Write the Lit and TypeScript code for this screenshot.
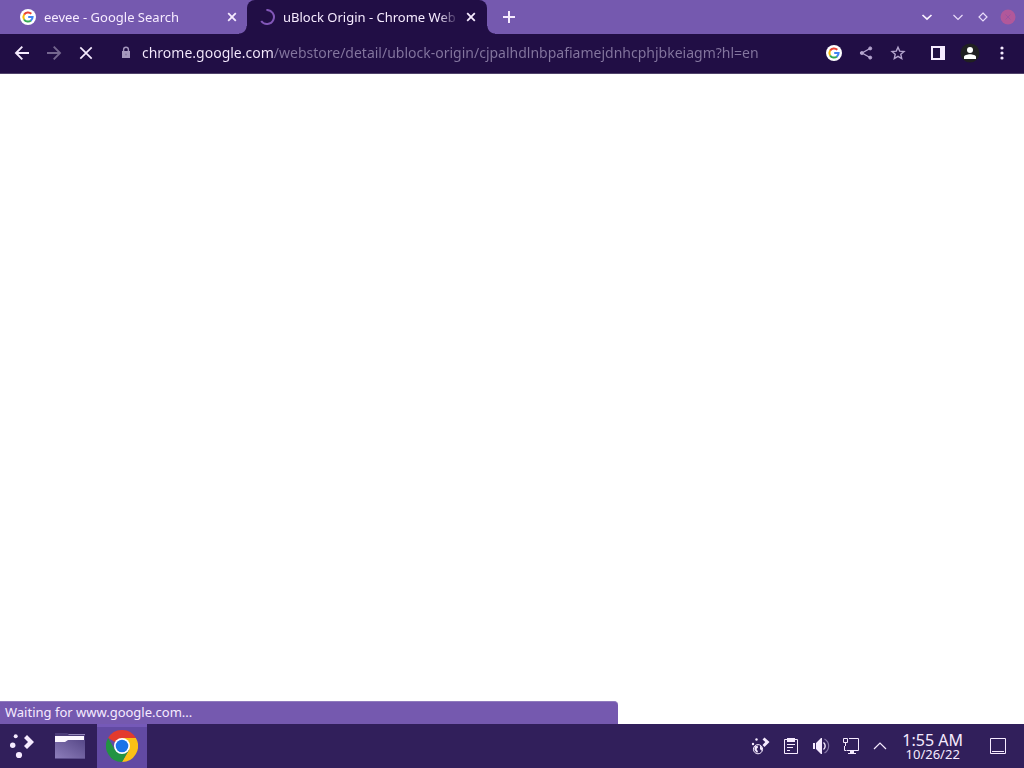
import { LitElement, html, css, svg } from "lit";
import { customElement } from "lit/decorators.js";

const googleG = html`<svg class="icon" width="16" height="16" viewBox="0 0 16 16" aria-hidden="true">
  <circle cx="8" cy="8" r="8" fill="#fff" />
  <g fill="none" stroke-width="2">
    <path d="M4.1 5.6A4.6 4.6 0 0 1 11.3 4.8" stroke="#ea4335" />
    <path d="M4.1 10.4A4.6 4.6 0 0 1 4.1 5.6" stroke="#fbbc05" />
    <path d="M11 11.5A4.6 4.6 0 0 1 4.1 10.4" stroke="#34a853" />
    <path d="M8.2 8H12.6A4.6 4.6 0 0 1 10.8 11.6" stroke="#4285f4" />
  </g>
</svg>`;

const line = (size: number, d: string, width = 2) => html`<svg class="icon" width=${size} height=${size}
  viewBox="0 0 ${size} ${size}" fill="none" stroke="currentColor" stroke-width=${width} aria-hidden="true">
  ${svg`<path d=${d} />`}
</svg>`;

const closeIcon = line(16, "M4.2 4.2L11.8 11.8M11.8 4.2L4.2 11.8", 1.8);

@customElement("browser-tabs")
export class BrowserTabs extends LitElement {
  static styles = css`
    :host {
      display: flex;
      height: 34px;
      background: #7559af;
      color: #f6ebff;
      font-size: 13px;
    }
    button {
      display: flex;
      align-items: center;
      justify-content: center;
      padding: 0;
      border: 0;
      background: none;
      color: inherit;
      font: inherit;
    }
    .icon { display: block; flex: none; }
    .tabs { display: flex; padding-left: 8px; min-width: 0; }
    .tab {
      position: relative;
      box-sizing: border-box;
      display: flex;
      align-items: center;
      gap: 4px;
      flex: 0 1 240px;
      width: 240px;
      min-width: 0;
      padding: 0 8px 0 12px;
    }
    .tab + .tab { margin-left: -1px; }
    .label {
      flex: 1;
      min-width: 0;
      justify-content: flex-start;
      gap: 8px;
      height: 34px;
    }
    .title {
      flex: 1;
      min-width: 0;
      overflow: hidden;
      white-space: nowrap;
      text-align: left;
      line-height: 20px;
      -webkit-mask-image: linear-gradient(to left, transparent, #000 20px);
      mask-image: linear-gradient(to left, transparent, #000 20px);
    }
    .active { background: #210e45; border-radius: 8px 8px 0 0; }
    .active::before,
    .active::after {
      content: "";
      position: absolute;
      bottom: 0;
      width: 8px;
      height: 8px;
    }
    .active::before { right: 100%; background: radial-gradient(circle at 0 0, transparent 7px, #210e45 8px); }
    .active::after { left: 100%; background: radial-gradient(circle at 100% 0, transparent 7px, #210e45 8px); }
    .new { width: 28px; margin-left: 8px; }
    .controls { display: flex; gap: 1px; margin-left: auto; padding-right: 4px; }
    .controls button { width: 24px; color: #e9dcfa; }
    .controls .search { margin-right: 6px; color: #fbf3ff; }
  `;

  render() {
    return html`
      <div class="tabs">
        <div class="tab">
          <button class="label">${googleG}<span class="title">eevee - Google Search</span></button>
          <button aria-label="Close eevee tab">${closeIcon}</button>
        </div>
        <div class="tab active">
          <button class="label" aria-current="page">
            <svg class="icon" width="16" height="16" viewBox="0 0 16 16" fill="none" stroke="#8257b8" stroke-width="2" aria-hidden="true">
              <path d="M7.4 1A7 7 0 1 1 2.2 12" />
            </svg>
            <span class="title">uBlock Origin - Chrome Web Store</span>
          </button>
          <button aria-label="Close uBlock tab">${closeIcon}</button>
        </div>
      </div>
      <button class="new" aria-label="New tab">${line(16, "M8 2V14M2 8H14")}</button>
      <div class="controls">
        <button class="search" aria-label="Search tabs">${line(16, "M3.5 6L8 10.2L12.5 6", 1.7)}</button>
        <button aria-label="Minimize">${line(16, "M3.5 6L8 10.5L12.5 6", 1.2)}</button>
        <button aria-label="Maximize">${line(16, "M8 4L12 8L8 12L4 8Z", 1.2)}</button>
        <button aria-label="Close window">
          <svg class="icon" width="16" height="16" viewBox="0 0 16 16" aria-hidden="true">
            <circle cx="8" cy="8" r="7.5" fill="#b1589a" />
            <path d="M5.5 5.5L10.5 10.5M10.5 5.5L5.5 10.5" stroke="#9c529f" />
          </svg>
        </button>
      </div>
    `;
  }
}

@customElement("browser-toolbar")
export class BrowserToolbar extends LitElement {
  static styles = css`
    :host {
      box-sizing: border-box;
      display: flex;
      align-items: center;
      gap: 4px;
      height: 40px;
      padding: 0 8px 1px;
      border-bottom: 1px solid #50436b;
      background: #210e45;
      color: #f6ebff;
    }
    button {
      display: flex;
      flex: none;
      align-items: center;
      justify-content: center;
      width: 28px;
      height: 28px;
      padding: 0;
      border: 0;
      background: none;
      color: inherit;
    }
    .icon { display: block; flex: none; }
    .dim { color: #75678f; }
    .soft { color: #b5a5cf; }
    .omnibox {
      display: flex;
      flex: 1;
      align-items: center;
      gap: 4px;
      min-width: 0;
      padding: 0 8px 0 14px;
    }
    .address {
      flex: 1;
      box-sizing: border-box;
      min-width: 0;
      height: 28px;
      margin-left: 4px;
      padding: 0 0 2px;
      border: 0;
      outline: 0;
      background: linear-gradient(to right, #f6ebff 132px, #84769f 132px);
      -webkit-background-clip: text;
      background-clip: text;
      color: transparent;
      font-family: inherit;
      font-size: 14px;
    }
  `;

  render() {
    return html`
      <button aria-label="Back">${line(16, "M15 8H2.5M8.3 1.7L2 8L8.3 14.3", 1.9)}</button>
      <button class="dim" aria-label="Forward" disabled>${line(16, "M1 8H13.5M7.7 1.7L14 8L7.7 14.3", 1.9)}</button>
      <button aria-label="Stop loading">${line(16, "M2.3 2.3L13.7 13.7M13.7 2.3L2.3 13.7", 1.7)}</button>
      <div class="omnibox">
        <svg class="icon" width="16" height="16" viewBox="0 0 16 16" fill="#a597bd" aria-hidden="true">
          <path d="M4 6H12V13H4Z" />
          <path d="M5.6 6V4.6A2.4 2.4 0 0 1 10.4 4.6V6" fill="none" stroke="#a597bd" stroke-width="1.4" />
          <circle cx="8" cy="9.5" r="1" fill="#8778a3" />
        </svg>
        <input class="address" type="text" aria-label="Address" spellcheck="false"
          value="chrome.google.com/webstore/detail/ublock-origin/cjpalhdlnbpafiamejdnhcphjbkeiagm?hl=en" />
        <button aria-label="Search with Google">${googleG}</button>
        <button class="soft" aria-label="Share">
          <svg class="icon" width="16" height="16" viewBox="0 0 16 16" fill="currentColor" stroke="currentColor" aria-hidden="true">
            <path d="M12 3.5L4 8L12 12.5" fill="none" stroke-width="1.4" />
            <circle cx="12.2" cy="3.4" r="1.5" /><circle cx="3.8" cy="8" r="1.5" /><circle cx="12.2" cy="12.6" r="1.5" />
          </svg>
        </button>
        <button class="soft" aria-label="Bookmark this page">
          ${line(16, "M8 2.2L9.7 6.1L14 6.5L10.8 9.3L11.7 13.5L8 11.3L4.3 13.5L5.2 9.3L2 6.5L6.3 6.1Z", 1.4)}
        </button>
      </div>
      <button aria-label="Side panel">
        <svg class="icon" width="16" height="16" viewBox="0 0 16 16" fill="currentColor" aria-hidden="true">
          <path fill-rule="evenodd" d="M1 1H15V15H1ZM3 3V13H10V3Z" />
        </svg>
      </button>
      <button aria-label="Profile">
        <svg class="icon" width="20" height="20" viewBox="0 0 20 20" aria-hidden="true">
          <circle cx="10" cy="10" r="9.5" fill="#202022" />
          <circle cx="10" cy="7" r="3" fill="#fff" />
          <path d="M4 16V14C4 12.2 7.5 11.3 10 11.3S16 12.2 16 14V16Z" fill="#fff" />
        </svg>
      </button>
      <button aria-label="Menu">
        <svg class="icon" width="16" height="16" viewBox="0 0 16 16" fill="currentColor" aria-hidden="true">
          <circle cx="8" cy="3" r="1.6" /><circle cx="8" cy="8" r="1.6" /><circle cx="8" cy="13" r="1.6" />
        </svg>
      </button>
    `;
  }
}

@customElement("desktop-panel")
export class DesktopPanel extends LitElement {
  static styles = css`
    :host {
      display: flex;
      height: 44px;
      background: #311f5b;
      color: #f6ebff;
    }
    button {
      display: flex;
      align-items: center;
      justify-content: center;
      padding: 0;
      border: 0;
      background: none;
      color: inherit;
      font: inherit;
    }
    .icon { display: block; flex: none; }
    .launchers { display: flex; }
    .start { width: 44px; }
    .task { width: 52px; }
    .running {
      width: 50px;
      background: #624aa3;
      box-shadow: inset 0 3px #7559b8;
      margin-left: 1px;
    }
    .tray { display: flex; gap: 8px; margin-left: auto; }
    .tray button { width: 22px; }
    .tray .more { width: 20px; }
    .clock {
      flex-direction: column;
      margin: 0 24px 0 12px;
    }
    .time { font-size: 16px; line-height: 16px; }
    .date { font-size: 13px; line-height: 13px; }
    .desktop { width: 22px; margin-right: 15px; }
  `;

  render() {
    return html`
      <div class="launchers">
        <button class="start" aria-label="Application launcher">
          <svg class="icon" width="28" height="28" viewBox="0 0 28 28" fill="currentColor" aria-hidden="true">
            <circle cx="7.7" cy="4.2" r="2" /><circle cx="4.7" cy="13.3" r="2.7" /><circle cx="11" cy="23" r="3.1" />
            <path d="M16 6L19 3L26 10L19 17L16 14L20 10Z" />
          </svg>
        </button>
        <button class="task" aria-label="File manager">
          <svg class="icon" width="32" height="32" viewBox="0 0 32 32" aria-hidden="true">
            <defs>
              <linearGradient id="folder" x1="0" y1="1" x2="1" y2="0">
                <stop offset="0" stop-color="#8e7fbc" /><stop offset="1" stop-color="#574888" />
              </linearGradient>
            </defs>
            <path d="M1 3H13L15 4H31V12H1Z" fill="#4c3b79" />
            <path d="M14 4H31V5H15Z" fill="#9587bb" />
            <path d="M1 6H30V14H1Z" fill="#fcf7ff" />
            <path d="M1 12H11L14 10H31V29H1Z" fill="url(#folder)" />
            <path d="M1 28H31V29H1Z" fill="#5c4d8b" />
          </svg>
        </button>
        <button class="running" aria-label="Google Chrome">
          <svg class="icon" width="32" height="32" viewBox="0 0 32 32" aria-hidden="true">
            <path d="M16 16L2.14 8A16 16 0 0 1 29.86 8Z" fill="#e33b2e" />
            <path d="M16 8H29.86A16 16 0 0 1 16 32L22.93 20Z" fill="#fbc116" />
            <path d="M2.14 8A16 16 0 0 0 16 32L22.93 20L16 16L9.07 20Z" fill="#229342" />
            <circle cx="16" cy="16" r="8" fill="#fff" />
            <circle cx="16" cy="16" r="6.3" fill="#1a73e8" />
          </svg>
        </button>
      </div>
      <div class="tray">
        <button aria-label="Updates">
          <svg class="icon" width="22" height="22" viewBox="0 0 22 22" fill="currentColor" aria-hidden="true">
            <circle cx="6.5" cy="4.5" r="1.2" />
            <path d="M12.5 4.5L14.5 2.5L19.5 7L14.5 12L12.5 10L15.3 7Z" />
            <circle cx="8" cy="14.2" r="4.6" fill="none" stroke="currentColor" />
            <path d="M4.5 11.5L7.5 10.5L8 12.5L6.5 14L8 16.5L7 18L4.5 15ZM10 10.5L12.5 13L11.5 16L10 14Z" />
            <circle cx="3" cy="9" r="1.2" />
          </svg>
        </button>
        <button aria-label="Clipboard">
          <svg class="icon" width="22" height="22" viewBox="0 0 22 22" fill="none" stroke="currentColor" aria-hidden="true">
            <path d="M4.5 4.5H17.5V18.5H4.5Z" />
            <path d="M7 3H15V7H7Z" fill="currentColor" stroke="none" />
            <path d="M7 9.5H15M7 12.5H13M7 15.5H10" />
          </svg>
        </button>
        <button aria-label="Volume">
          <svg class="icon" width="22" height="22" viewBox="0 0 22 22" fill="currentColor" aria-hidden="true">
            <path d="M3 8H5V14H3ZM6 8L11 3H12V19H11L6 14Z" />
            <path d="M13.5 7.5A4.5 4.5 0 0 1 13.5 14.5" fill="none" stroke="currentColor" stroke-width="1.4" />
            <path d="M14.5 4A8 8 0 0 1 14.5 18" fill="none" stroke="#8476a6" stroke-width="1.2" />
          </svg>
        </button>
        <button aria-label="Network">
          <svg class="icon" width="22" height="22" viewBox="0 0 22 22" fill="none" stroke="currentColor" aria-hidden="true">
            <path d="M9 3.5H18.5V15.5H7M3.5 3.5H7.5V7.5H3.5ZM5.5 8V11M4.5 11V15.5H6.5" />
            <path d="M10 16H14V18H16V19H8V18H10Z" fill="currentColor" stroke="none" />
          </svg>
        </button>
        <button class="more" aria-label="Show hidden icons">${line(16, "M2 11L8 5L14 11", 1.2)}</button>
      </div>
      <button class="clock">
        <span class="time">1:55 AM</span>
        <span class="date">10/26/22</span>
      </button>
      <button class="desktop" aria-label="Show desktop">
        <svg class="icon" width="22" height="22" viewBox="0 0 22 22" fill="none" stroke="currentColor" aria-hidden="true">
          <path d="M3.5 3.5H18.5V18.5H3.5ZM5 16.5H17" />
        </svg>
      </button>
    `;
  }
}

@customElement("app-root")
export class AppRoot extends LitElement {
  static styles = css`
    :host {
      display: flex;
      flex-direction: column;
      height: 100vh;
      overflow: hidden;
      background: #fff;
      font-family: "Noto Sans", sans-serif;
    }
    .page { position: relative; flex: 1; background: #fff; }
    .status {
      position: absolute;
      left: 0;
      bottom: 0;
      box-sizing: border-box;
      width: 618px;
      max-width: 100%;
      height: 23px;
      padding: 0 5px;
      border-top: 1px solid #8f7bbd;
      border-radius: 0 4px 0 0;
      background: #7559af;
      color: #f6ebff;
      font-size: 13px;
      line-height: 20px;
    }
  `;

  render() {
    return html`
      <browser-tabs></browser-tabs>
      <browser-toolbar></browser-toolbar>
      <main class="page"><div class="status" role="status">Waiting for www.google.com...</div></main>
      <desktop-panel></desktop-panel>
    `;
  }
}
